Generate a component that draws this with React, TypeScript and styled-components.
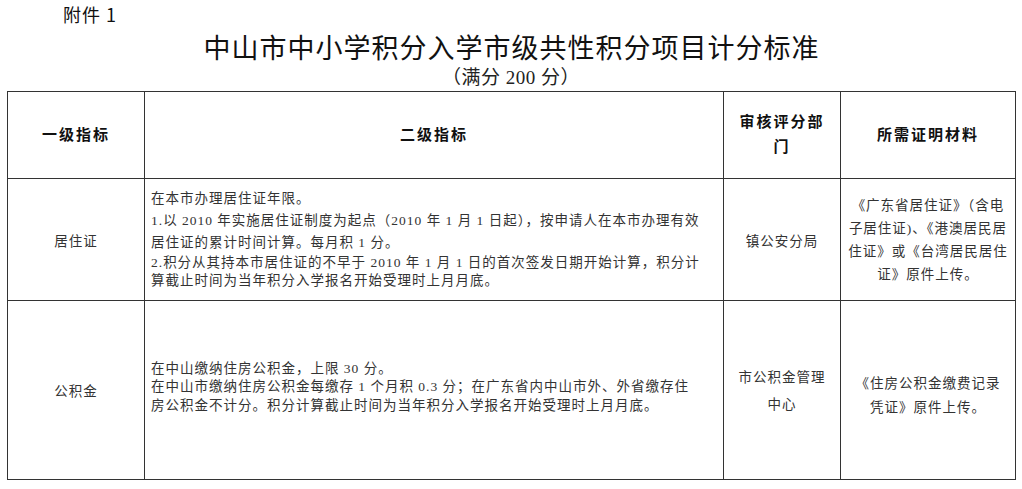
import { FC } from "react";
import styled, { createGlobalStyle } from "styled-components";

const GlobalStyle = createGlobalStyle`
  html, body {
    margin: 0;
    padding: 0;
    background: #fff;
  }
  body {
    font-family: "Liberation Serif", "Noto Sans CJK SC", serif;
    color: #222;
  }
`;

const Page = styled.div`
  width: 1022px;
  height: 489px;
  padding: 5px 7px 0 7px;
  box-sizing: border-box;
  overflow: hidden;
`;

const Attachment = styled.div`
  font-family: "Noto Sans CJK SC", sans-serif;
  font-size: 18px;
  height: 20px;
  line-height: 18px;
  letter-spacing: 1px;
  padding-left: 56px;
  color: #111;
`;

const Title = styled.h1`
  margin: 4px 0 0 0;
  height: 36px;
  font-family: "Noto Sans CJK SC", sans-serif;
  font-weight: 400;
  font-size: 27px;
  line-height: 36px;
  text-align: center;
  letter-spacing: 1px;
  text-indent: 1px;
  color: #111;
`;

const SubTitle = styled.div`
  margin-top: 2px;
  height: 22px;
  font-family: "Liberation Serif", "Noto Sans CJK SC", serif;
  font-size: 19px;
  line-height: 22px;
  letter-spacing: 0.5px;
  text-align: center;
  color: #222;
  margin-bottom: 2px;
`;

const Table = styled.table`
  width: 1008px;
  border-collapse: collapse;
  table-layout: fixed;
  border: 1.5px solid #333;
`;

const HeadCell = styled.th`
  border: 1px solid #333;
  height: 86px;
  padding: 0 4px;
  font-family: "Liberation Serif", "Noto Sans CJK SC", serif;
  font-weight: 700;
  font-size: 15px;
  line-height: 25px;
  letter-spacing: 2px;
  text-align: center;
  vertical-align: middle;
  color: #111;
`;

const Cell = styled.td<{ $h: number; $align?: string; $pt?: number; $pb?: number }>`
  border: 1px solid #333;
  height: ${(p) => p.$h - (p.$pt ?? 0) - (p.$pb ?? 0)}px;
  padding: ${(p) => p.$pt ?? 0}px 6px ${(p) => p.$pb ?? 0}px 6px;
  font-size: 13.5px;
  letter-spacing: 1px;
  text-align: ${(p) => p.$align ?? "center"};
  vertical-align: middle;
  color: #333;
`;

const Line = styled.span<{ $lh?: number }>`
  display: block;
  white-space: nowrap;
  height: ${(p) => p.$lh ?? 21}px;
  line-height: ${(p) => p.$lh ?? 21}px;
`;

const App: FC = () => {
  return (
    <Page>
      <GlobalStyle />
      <Attachment>附件 1</Attachment>
      <Title>中山市中小学积分入学市级共性积分项目计分标准</Title>
      <SubTitle>（满分 200 分）</SubTitle>
      <Table>
        <colgroup>
          <col style={{ width: 137 }} />
          <col style={{ width: 579 }} />
          <col style={{ width: 117 }} />
          <col style={{ width: 175 }} />
        </colgroup>
        <thead>
          <tr>
            <HeadCell>一级指标</HeadCell>
            <HeadCell>二级指标</HeadCell>
            <HeadCell>
              审核评分部
              <br />门
            </HeadCell>
            <HeadCell>所需证明材料</HeadCell>
          </tr>
        </thead>
        <tbody>
          <tr>
            <Cell $h={121}>居住证</Cell>
            <Cell $h={121} $align="left" $pb={2}>
              <Line $lh={20}>在本市办理居住证年限。</Line>
              <Line $lh={23}>
                1.以 2010 年实施居住证制度为起点（2010 年 1 月 1 日起），按申请人在本市办理有效
              </Line>
              <Line $lh={22}>居住证的累计时间计算。每月积 1 分。</Line>
              <Line $lh={18}>
                2.积分从其持本市居住证的不早于 2010 年 1 月 1 日的首次签发日期开始计算，积分计
              </Line>
              <Line $lh={17}>算截止时间为当年积分入学报名开始受理时上月月底。</Line>
            </Cell>
            <Cell $h={121}>镇公安分局</Cell>
            <Cell $h={121}>
              <Line $lh={23}>《广东省居住证》（含电</Line>
              <Line $lh={23}>子居住证)、《港澳居民居</Line>
              <Line $lh={23}>住证》或《台湾居民居住</Line>
              <Line $lh={23}>证》原件上传。</Line>
            </Cell>
          </tr>
          <tr>
            <Cell $h={178}>公积金</Cell>
            <Cell $h={178} $align="left" $pb={5}>
              <Line $lh={18.5}>在中山缴纳住房公积金，上限 30 分。</Line>
              <Line $lh={18.5}>
                在中山市缴纳住房公积金每缴存 1 个月积 0.3 分；在广东省内中山市外、外省缴存住
              </Line>
              <Line $lh={18.5}>房公积金不计分。积分计算截止时间为当年积分入学报名开始受理时上月月底。</Line>
            </Cell>
            <Cell $h={178} $pt={1}>
              <Line $lh={27}>市公积金管理</Line>
              <Line $lh={27}>中心</Line>
            </Cell>
            <Cell $h={178} $pt={11}>
              <Line $lh={24}>《住房公积金缴费记录</Line>
              <Line $lh={24}>凭证》原件上传。</Line>
            </Cell>
          </tr>
        </tbody>
      </Table>
    </Page>
  );
};

export default App;
